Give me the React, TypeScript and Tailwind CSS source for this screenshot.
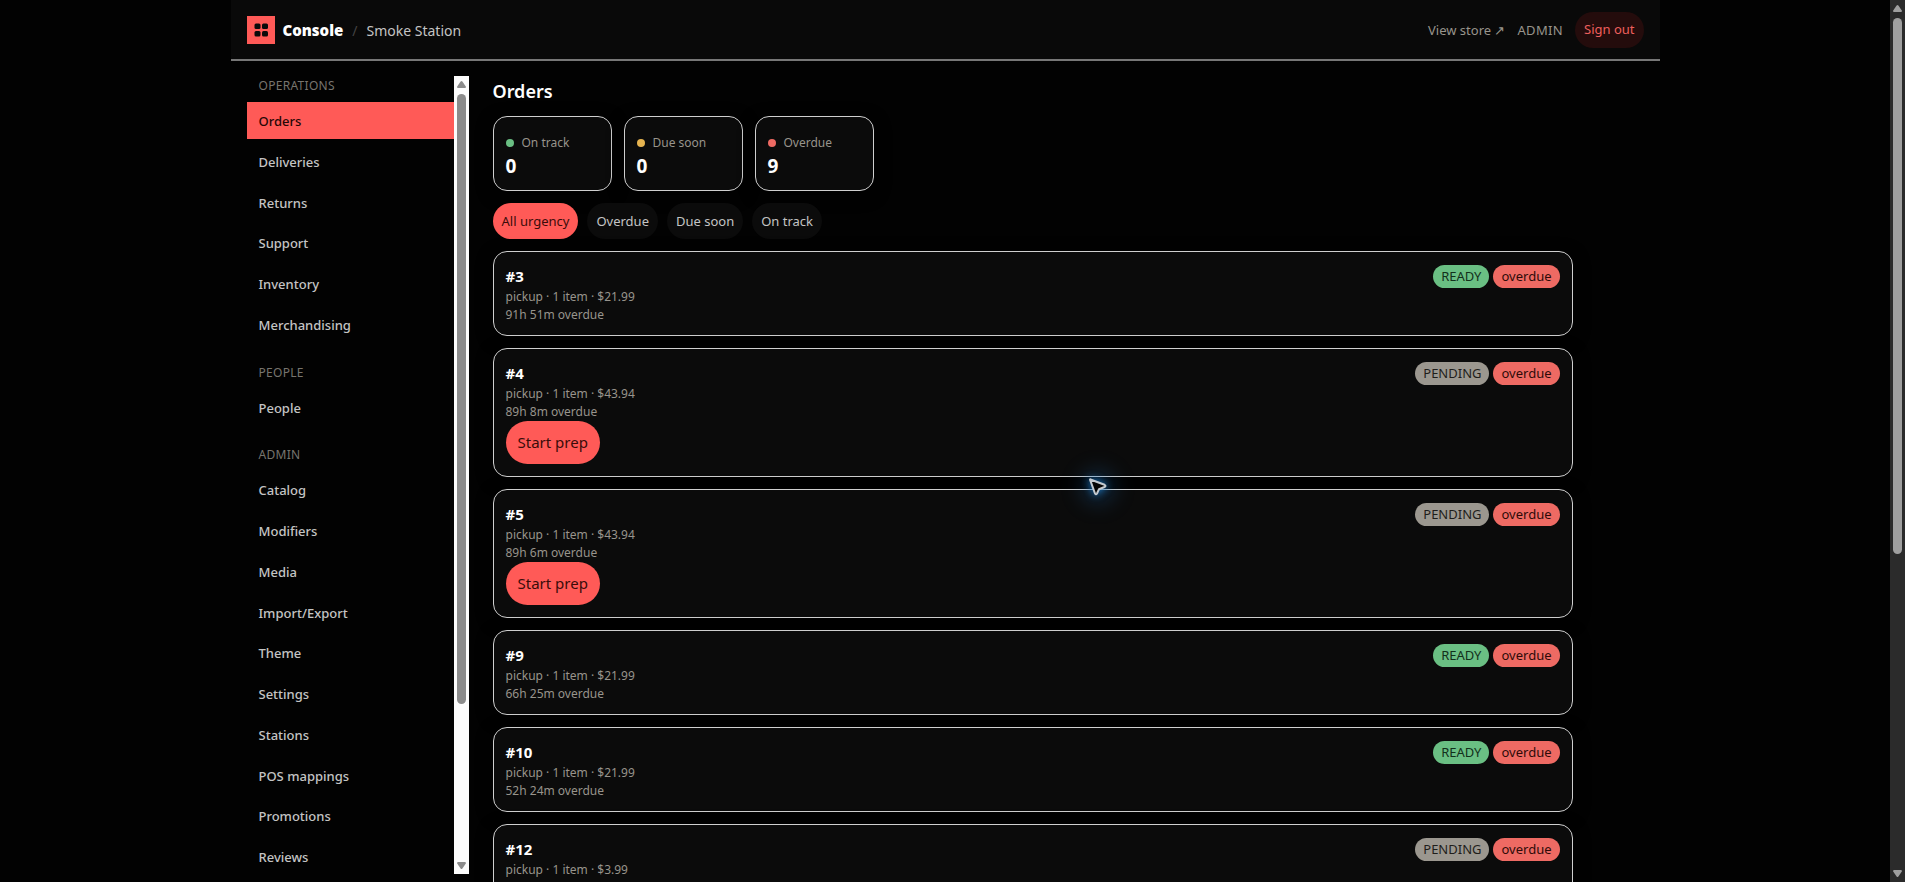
import React from 'react';

type Order = {
  id: number;
  total: string;
  late: string;
  status: 'READY' | 'PENDING';
};

const navGroups = [
  {
    title: 'Operations',
    items: ['Orders', 'Deliveries', 'Returns', 'Support', 'Inventory', 'Merchandising']
  },
  {
    title: 'People',
    items: ['People']
  },
  {
    title: 'Admin',
    items: [
      'Catalog',
      'Modifiers',
      'Media',
      'Import/Export',
      'Theme',
      'Settings',
      'Stations',
      'POS mappings',
      'Promotions',
      'Reviews'
    ]
  }
];

const stats = [
  { label: 'On track', value: 0, dot: 'bg-[#6abf83]' },
  { label: 'Due soon', value: 0, dot: 'bg-[#e6b450]' },
  { label: 'Overdue', value: 9, dot: 'bg-[#ee6a63]' }
];

const filters = ['All urgency', 'Overdue', 'Due soon', 'On track'];

const orders: Order[] = [
  { id: 3, total: '$21.99', late: '91h 51m', status: 'READY' },
  { id: 4, total: '$43.94', late: '89h 8m', status: 'PENDING' },
  { id: 5, total: '$43.94', late: '89h 6m', status: 'PENDING' },
  { id: 9, total: '$21.99', late: '66h 25m', status: 'READY' },
  { id: 10, total: '$21.99', late: '52h 24m', status: 'READY' },
  { id: 12, total: '$3.99', late: '48h 12m', status: 'PENDING' }
];

const Arrow = ({ down = false }: { down?: boolean }) => (
  <svg viewBox="0 0 15 18" className={`h-[18px] w-[15px] shrink-0 ${down ? 'rotate-180' : ''}`} fill="currentColor">
    <path d="M6.6 5.6 Q7.5 4.4 8.4 5.6 L11.8 10.4 Q12.3 12 11 12 H4 Q2.7 12 3.2 10.4 Z" />
  </svg>
);

const Header = () => (
  <header className="flex h-[61px] shrink-0 items-center justify-between border-b-2 border-[#777] bg-[#090909] px-4">
    <div className="flex items-center">
      <div className="mr-2 flex h-7 w-7 items-center justify-center bg-[#ff5a57]">
        <svg viewBox="0 0 14 14" className="h-3.5 w-3.5" fill="#0a0a0a">
          <rect x="0.5" y="0.5" width="6" height="5.5" rx="1.5" />
          <rect x="8" y="0.5" width="6" height="5.5" rx="1.5" />
          <rect x="0.5" y="8" width="6" height="5.5" rx="1.5" />
          <rect x="8" y="8" width="6" height="5.5" rx="1.5" />
        </svg>
      </div>
      <span className="pt-0.5 text-[15px] font-black text-white">Console</span>
      <span className="mx-[9px] pt-0.5 text-sm text-[#444]">/</span>
      <span className="pt-0.5 text-sm text-[#c4c4c4]">Smoke Station</span>
    </div>
    <div className="flex items-center gap-3 text-[13px]">
      <a href="#store" className="pt-0.5 text-[#98948c]">View store ↗</a>
      <span className="pt-0.5 text-[13px] tracking-wide text-[#98948c] uppercase">Admin</span>
      <button className="h-9 rounded-full bg-[#240c0c] px-[9px] pt-px text-[#ee5f5c]">Sign out</button>
    </div>
  </header>
);

const Sidebar = () => (
  <div className="flex w-[222px] shrink-0">
    <nav className="flex-1 overflow-hidden">
      {navGroups.map((group) => (
        <div key={group.title} className="mb-5">
          <h2 className="mb-1.5 px-3 text-xs leading-5 tracking-wide text-[#77746e] uppercase">{group.title}</h2>
          <ul className="flex flex-col gap-1">
            {group.items.map((item) => (
              <li key={item}>
                <a
                  href={`#${item.toLowerCase()}`}
                  className={`block px-3 pt-2 pb-1.5 text-[13px] leading-[1.75] font-medium ${
                    item === 'Orders' ? 'bg-[#ff5a57] text-[#260706]' : 'text-[#c4c4c4]'
                  }`}
                >
                  {item}
                </a>
              </li>
            ))}
          </ul>
        </div>
      ))}
    </nav>
    <div className="flex w-[15px] flex-col items-center bg-[#fcfcfc] text-[#8b8b8b]">
      <Arrow />
      <div className="w-full flex-1 px-[3px]">
        <div className="h-[80%] rounded-full bg-[#8b8b8b]" />
      </div>
      <Arrow down />
    </div>
  </div>
);

const OrderCard = ({ order }: { order: Order }) => (
  <article className="flex shrink-0 items-start justify-between rounded-[14px] border border-[#cfcfcf] bg-[#0b0b0b] px-3 pt-3 pb-[11px] shadow-[0_4px_16px_#000]">
    <div>
      <h3 className="text-[15px] leading-6 font-bold text-white">#{order.id}</h3>
      <p className="text-xs leading-[18px] text-[#98948c]">pickup · 1 item · {order.total}</p>
      <p className="text-xs leading-[18px] text-[#98948c]">{order.late} overdue</p>
      {order.status === 'PENDING' && (
        <button className="mb-px block h-[43px] rounded-full bg-[#ff5a57] px-3 text-[15px] text-[#3a0c0a]">
          Start prep
        </button>
      )}
    </div>
    <div className="flex gap-1 pt-px text-[13px] leading-[23px]">
      <span
        className={`rounded-full px-2 ${
          order.status === 'READY' ? 'bg-[#6abf83] text-[#12301b]' : 'bg-[#9b978f] text-[#1f1e1b]'
        }`}
      >
        {order.status}
      </span>
      <span className="rounded-full bg-[#ee6a63] px-2 text-[#2e0b09]">overdue</span>
    </div>
  </article>
);

const App = () => {
  return (
    <div className="relative flex h-screen overflow-hidden bg-[#020202] font-['Noto_Sans',sans-serif]">
      <div className="flex flex-1 justify-center">
        <div className="flex w-full max-w-[1429px] flex-col">
          <Header />
          <div className="flex min-h-0 flex-1 gap-6 px-4 pt-[15px]">
            <div className="flex min-h-0 pb-2">
              <Sidebar />
            </div>

            <main className="min-w-0 flex-1">
              <div className="flex max-w-[1080px] flex-col gap-3">
                <h1 className="pt-0.5 text-lg leading-[26px] font-semibold text-white">Orders</h1>

                {/* Urgency summary */}
                <div className="flex gap-3">
                  {stats.map((stat) => (
                    <div
                      key={stat.label}
                      className="h-[75px] w-[119px] rounded-[14px] border border-[#cfcfcf] bg-[#0b0b0b] px-3 pt-[17px] shadow-[0_4px_16px_#000]"
                    >
                      <div className="flex items-center gap-2 text-xs leading-[18px] text-[#98948c]">
                        <span className={`h-2 w-2 rounded-full ${stat.dot}`} />
                        {stat.label}
                      </div>
                      <div className="text-[19px] leading-7 font-bold text-white">{stat.value}</div>
                    </div>
                  ))}
                </div>

                <div className="flex gap-[9px]">
                  {filters.map((filter, index) => (
                    <button
                      key={filter}
                      className={`h-9 rounded-full px-[9px] pt-px text-[13px] ${
                        index === 0 ? 'bg-[#ff5a57] text-[#3a0c0a]' : 'bg-[#0b0b0b] text-[#c4c4c4]'
                      }`}
                    >
                      {filter}
                    </button>
                  ))}
                </div>

                {/* Order list */}
                {orders.map((order) => (
                  <OrderCard key={order.id} order={order} />
                ))}
              </div>
            </main>
          </div>
        </div>
      </div>

      {/* Page scrollbar */}
      <div className="flex w-[15px] shrink-0 flex-col items-center bg-[#2b2b2b] text-[#9f9f9f]">
        <Arrow />
        <div className="w-full flex-1 px-[3px]">
          <div className="h-[63.4%] rounded-full bg-[#9f9f9f]" />
        </div>
        <Arrow down />
      </div>

      {/* Pointer */}
      <div className="absolute top-[469px] left-[1080px] h-9 w-9 rounded-full bg-[#1d7fd0]/20 blur-[10px]" />
      <svg
        viewBox="0 0 20 20"
        className="absolute top-[477px] left-[1088px] h-5 w-5 drop-shadow-[0_0_4px_#1d7fd0]"
        fill="#050505"
        stroke="#c4cad0"
        strokeWidth="2"
        strokeLinejoin="round"
      >
        <path d="M2.5 2.5 Q1.8 2 2.2 3.2 L7 16.5 Q8 18 9 16.5 L11 12.2 L16.5 10 Q18.5 9 16.5 7.8 Z" />
      </svg>
    </div>
  );
};

export default App;
